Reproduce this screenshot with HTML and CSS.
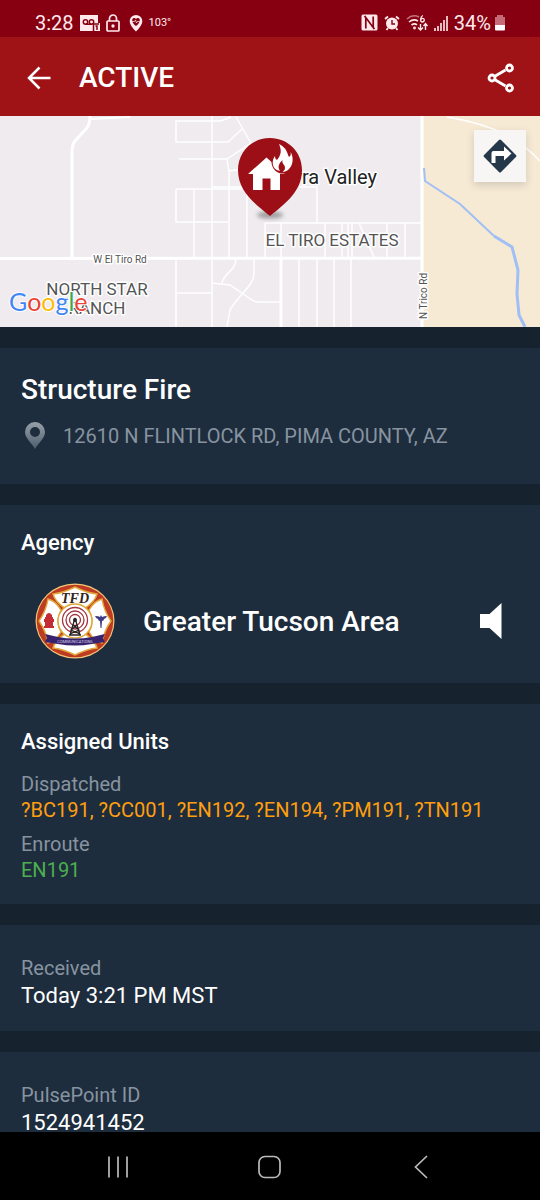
FILE: index.html
```html
<!DOCTYPE html>
<html lang="en">
<head>
    <meta charset="UTF-8">
    <meta name="viewport" content="width=device-width, initial-scale=1.0">
    <title>Active Incident</title>
    <link rel="stylesheet" href="styles.css">
</head>
<body>
    <!-- Status bar -->
    <div class="status-bar">
        <div class="status-group">
            <span class="clock">3:28</span>
            <svg class="status-icon" width="20" height="18" viewBox="0 0 20 18">
                <path fill="#ffe9ec" d="M0 1h18v8h2v8H0z"/>
                <g fill="none" stroke="#860012" stroke-width="1.500">
                    <circle cx="5.500" cy="8" r="2.200"/>
                    <circle cx="11.500" cy="8" r="2.200"/>
                    <path d="M5.500 10.200h6M13.500 17V10H19"/>
                    <path d="M15.500 12h1.500v4"/>
                </g>
            </svg>
            <svg class="status-icon lock" width="14" height="18" viewBox="0 0 14 18" fill="none" stroke="#ffe9ec" stroke-width="1.700">
                <rect x="1" y="7" width="12" height="10" rx="1"/>
                <path d="M3.500 7V4.500a3.500 3.500 0 0 1 7 0V7"/>
                <circle cx="7" cy="12" r=".8" fill="#ffe9ec"/>
            </svg>
            <svg class="status-icon" width="14" height="18" viewBox="0 0 14 18">
                <path fill="#ffe9ec" d="M7 1a6.300 6.300 0 0 0-6.300 6.300C.7 12 7 17.500 7 17.500s6.300-5.500 6.300-10.200A6.300 6.300 0 0 0 7 1z"/>
                <path fill="#860012" d="M7 12C2 8.500 2.600 4 5 4c1 0 1.600.5 2 1.200C7.400 4.500 8 4 9 4c2.400 0 3 4.500-2 8z"/>
                <path fill="none" stroke="#ffe9ec" stroke-width=".7" d="M3 7.500h2.500l1-1.500 1 3 .8-1.500H11"/>
            </svg>
            <span class="temp">103°</span>
        </div>
        <div class="status-group">
            <svg class="status-icon" width="17" height="17" viewBox="0 0 17 17">
                <rect x=".5" y=".5" width="16" height="16" rx="1.500" fill="#ffe9ec"/>
                <path fill="none" stroke="#860012" stroke-width="1.700" d="M4.800 14.500V3.500l7.400 10v-11M3.500 2l2.500 3M11 12l2.500 3"/>
            </svg>
            <svg class="status-icon" width="16" height="16" viewBox="0 0 16 16">
                <circle cx="8" cy="8.500" r="6" fill="#ffe9ec"/>
                <path fill="none" stroke="#ffe9ec" stroke-width="1.800" d="M1 4l3-2.500M15 4l-3-2.500M4 13l-1.500 2M12 13l1.500 2"/>
                <path fill="none" stroke="#860012" stroke-width="1.400" d="M8 5v4h3"/>
            </svg>
            <svg class="status-icon" width="22" height="18" viewBox="0 0 22 18" fill="none" stroke="#ffe9ec" stroke-width="1.600">
                <path opacity=".5" d="M1 5c4-3.800 8-4 12-2"/>
                <path d="M3 8c3-2.500 6-2.800 9-1M5.500 11c2-1.500 4-1.500 5.500 0"/>
                <circle cx="8.500" cy="14" r=".6"/>
                <path stroke-width="1.300" d="M17 1.500c-3 1-3 6-1 6.500 3 0 3-4 0-3.500-1 .2-1.500 1-1.500 1.800"/>
                <path stroke-width="1.400" d="M14.500 10v6M12 13.500l2.500 2.500 2.500-2.500M19.500 16v-6M17.500 12l2-2.500 2 2.500"/>
            </svg>
            <svg class="status-icon" width="14" height="16" viewBox="0 0 14 16" stroke="#ffe9ec" stroke-width="1.600">
                <path d="M1 16v-3M4 16v-5M7 16V8M10 16V5M13 16V1"/>
            </svg>
            <span class="battery-level">34%</span>
            <svg class="status-icon battery" width="12" height="17" viewBox="0 0 12 17">
                <path fill="#c56b78" d="M3 1h6v2h2v9H1V3h2z"/>
                <path fill="#fff" d="M1 11h10v4.500a1 1 0 0 1-1 1H2a1 1 0 0 1-1-1z"/>
            </svg>
        </div>
    </div>

    <!-- App bar -->
    <header class="app-bar">
        <button class="icon-button" aria-label="Back">
            <svg width="24" height="24" viewBox="0 0 24 24" fill="none" stroke="#fff" stroke-width="2.500">
                <path d="M23.500 12H2M12.500 1.500L2 12l10.500 10.500"/>
            </svg>
        </button>
        <h1>ACTIVE</h1>
        <button class="icon-button" aria-label="Share">
            <svg width="28" height="30" viewBox="0 0 28 30" fill="none" stroke="#fff" stroke-width="2.800">
                <path d="M7.500 13.500l11-6.500M7.500 16.500l11 6.500"/>
                <circle cx="5" cy="15" r="3"/>
                <circle cx="22.500" cy="5" r="3"/>
                <circle cx="22.500" cy="25" r="3"/>
            </svg>
        </button>
    </header>

    <main class="content">
        <!-- Map -->
        <div class="map">
            <svg class="map-canvas" viewBox="0 0 540 211" preserveAspectRatio="xMidYMid slice">
                <defs>
                    <filter id="shadow-blur" x="-50%" y="-100%" width="200%" height="300%">
                        <feGaussianBlur stdDeviation="2"/>
                    </filter>
                </defs>
                <rect width="540" height="211" fill="#efebef"/>
                <rect x="423" width="117" height="211" fill="#f6ead5"/>
                <g fill="none" stroke="#fff" stroke-width="1.500">
                    <path d="M231 1l-10 4h-45v21h52l14-13M236 1l15 26M179 43h48l24-16M227 43l2 13v85M229 55l14-2"/>
                    <path d="M212 0v211M176 73h71v68M212 71h35M176 73v33h53M194 73v68M265 107v34"/>
                    <path d="M176 142v69M176 177h36M236 142c0 14-12 14-14 25M212 167l18 2 22 15q3 2 7 2h22"/>
                    <path d="M254 142v15c0 13-14 20-24 37l-3 17"/>
                    <path d="M265 107h157M299 71h18v36M281 107v34M325 107v34M342 107v34M348 107v34M352 107v34M359 107l15 34M387 107v34M405 107v34"/>
                    <path d="M299 142v69M317 142v69M334 142v69M351 142v69"/>
                    <path d="M447 1q36 6 60 18 18 10 33 26"/>
                </g>
                <g fill="none" stroke="#fff" stroke-width="3">
                    <path d="M90 0q0 10-5 14L75 25q-3 4-3 11v105M0 142.500l423-.5M281 142v69M422 0v211"/>
                    <path stroke-width="2" d="M90 3l40-2"/>
                </g>
                <g fill="none" stroke="#a0bff5">
                    <path stroke-width="2" d="M424 52l1 13 35 23 34 32"/>
                    <path stroke-width="3" d="M494 120l18 11 6 23-1 24 2 21 6 12"/>
                </g>
                <g class="map-labels">
                    <text class="town" x="377" y="68" text-anchor="end">Avra Valley</text>
                    <text class="area" x="332" y="130" text-anchor="middle">EL TIRO ESTATES</text>
                    <text class="area" x="97" y="179" text-anchor="middle">NORTH STAR</text>
                    <text class="area" x="97" y="198" text-anchor="middle">RANCH</text>
                    <text class="road" x="120" y="147" text-anchor="middle">W El Tiro Rd</text>
                    <text class="road" transform="translate(427 203) rotate(-90)">N Trico Rd</text>
                </g>
                <text class="google" x="9" y="195"><tspan fill="#4285f4">G</tspan><tspan fill="#ea4335">o</tspan><tspan fill="#fbbc05">o</tspan><tspan fill="#4285f4">g</tspan><tspan fill="#34a853">l</tspan><tspan fill="#ea4335">e</tspan></text>
                <!-- Incident pin -->
                <ellipse cx="270" cy="99" rx="13" ry="3.500" fill="#777" opacity=".7" filter="url(#shadow-blur)"/>
                <path fill="#9d0f16" d="M270 22c-18 0-32 14-32 32 0 21 16 33 32 46 16-13 32-25 32-46 0-18-14-32-32-32z"/>
                <path fill="#fff" d="M266.500 41.500L285 58h-5v16h-9.500V62.500h-8V74H253V58h-5z"/>
                <circle cx="283" cy="46" r="11.500" fill="#9d0f16"/>
                <path fill="#fff" d="M279 28c8 4 8 9 10 13 2-1 2-3 1.500-5 4.500 7 2 19-8 20 3-2 3-5 1.500-7-1.500-2-2-3-1.500-5-4 4-5 7-2.500 11-8-1-9-10-5-15 0 2 .5 3 2 4 4-5 5-9 2-16z"/>
            </svg>
            <button class="directions" aria-label="Directions">
                <svg width="36" height="36" viewBox="0 0 36 36">
                    <rect x="6" y="6" width="24" height="24" rx="1.500" fill="#24384a" transform="rotate(45 18 18)"/>
                    <path fill="#fff" d="M9.500 25V15a2 2 0 0 1 2-2H22V8.500l7.500 7-7.500 7V18h-8.500v7z"/>
                </svg>
            </button>
        </div>

        <section class="card incident">
            <h2>Structure Fire</h2>
            <div class="address">
                <svg width="28" height="28" viewBox="0 0 28 28">
                    <defs>
                        <linearGradient id="pin-fill" x1="0" y1="0" x2="0" y2="1">
                            <stop offset="0" stop-color="#98a1a8"/>
                            <stop offset="1" stop-color="#4b5d6c"/>
                        </linearGradient>
                    </defs>
                    <path fill="url(#pin-fill)" fill-rule="evenodd" d="M14 0a10 10 0 0 0-10 10c0 6 6 10 10 17 4-7 10-11 10-17A10 10 0 0 0 14 0zm0 5a5 5 0 1 1 0 10 5 5 0 0 1 0-10z"/>
                </svg>
                <span>12610 N FLINTLOCK RD, PIMA COUNTY, AZ</span>
            </div>
        </section>

        <section class="card agency">
            <h3>Agency</h3>
            <div class="agency-row">
                <svg width="80" height="76" viewBox="0 0 80 76">
                    <ellipse cx="40" cy="38" rx="39.500" ry="37.500" fill="#f0c878"/>
                    <ellipse cx="40" cy="38" rx="38.300" ry="36.300" fill="#bf3a22"/>
                    <g fill="#fff" stroke="#e0a83a" stroke-width="1.500">
                        <path d="M18 11q10-1 22-7 12 6 22 7-2 8-13 15-9-5-18 0-11-7-13-15z"/>
                        <path d="M18 65q10 1 22 7 12-6 22-7-2-8-13-15-9 5-18 0-11 7-13 15z"/>
                        <path d="M13 16q-2 12-9 22 7 10 9 22 8-2 13-11-6-11 0-22-5-9-13-11z"/>
                        <path d="M67 16q2 12 9 22-7 10-9 22-8-2-13-11 6-11 0-22 5-9 13-11z"/>
                        <circle cx="40" cy="38" r="17"/>
                    </g>
                    <g fill="none" stroke="#a33640" stroke-width="1.300">
                        <circle cx="40" cy="37" r="12.500"/>
                        <circle cx="40" cy="37" r="9"/>
                        <circle cx="40" cy="37" r="5.500"/>
                    </g>
                    <path fill="none" stroke="#222" stroke-width="1.300" d="M40 35l-5 17M40 35l5 17M38 42l6 5-9 4M42 42l-6 5 9 4M34 52h12"/>
                    <circle cx="40" cy="37" r="2" fill="#222"/>
                    <path fill="#c52d34" d="M11 32q3-4 6 0v2h1v2h1v3h-1v4h1v2H9v-2h1v-4H9v-3h1v-2h1z"/>
                    <path fill="#3e3a86" d="M60 33q4 0 5 1l1-2 1 2q2-1 5-1-1 3-3 3 0 2-2 2l-.5 7h-1l-.5-7q-2 0-2-2-2 0-3-3z"/>
                    <path fill="#38246e" d="M10 51l13 3q17 3 34 0l13-3-2 4 2 4-13 2q-17 3-34 0l-13-2 2-4z"/>
                    <text class="badge-ribbon" x="40" y="60" text-anchor="middle">COMMUNICATIONS</text>
                    <text class="badge-name" x="40" y="20" text-anchor="middle">TFD</text>
                </svg>
                <span class="agency-name">Greater Tucson Area</span>
                <button class="icon-button" aria-label="Listen">
                    <svg width="22" height="36" viewBox="0 0 22 36">
                        <path fill="#fff" d="M0 11h9.500L21.500 0v36L9.500 25H0z"/>
                    </svg>
                </button>
            </div>
        </section>

        <section class="card units">
            <h3>Assigned Units</h3>
            <dl>
                <dt>Dispatched</dt>
                <dd class="dispatched">?BC191, ?CC001, ?EN192, ?EN194, ?PM191, ?TN191</dd>
                <dt>Enroute</dt>
                <dd class="enroute">EN191</dd>
            </dl>
        </section>

        <section class="card detail">
            <dl>
                <dt>Received</dt>
                <dd>Today 3:21 PM MST</dd>
            </dl>
        </section>

        <section class="card detail">
            <dl>
                <dt>PulsePoint ID</dt>
                <dd>1524941452</dd>
            </dl>
        </section>
    </main>

    <!-- System navigation -->
    <nav class="nav-bar">
        <button class="icon-button" aria-label="Recents">
            <svg width="24" height="24" viewBox="0 0 24 24" stroke="#bbb" stroke-width="1.700">
                <path d="M3 1.500v21M12 1.500v21M21 1.500v21"/>
            </svg>
        </button>
        <button class="icon-button" aria-label="Home">
            <svg width="24" height="24" viewBox="0 0 24 24" fill="none" stroke="#bbb" stroke-width="1.700">
                <rect x="1" y="1.500" width="21" height="21" rx="6"/>
            </svg>
        </button>
        <button class="icon-button" aria-label="Back">
            <svg width="24" height="24" viewBox="0 0 24 24" fill="none" stroke="#bbb" stroke-width="1.700">
                <path d="M17 1L5.500 12 17 23"/>
            </svg>
        </button>
    </nav>
</body>
</html>
```

FILE: styles.css
```css
* {
    box-sizing: border-box;
}

body {
    display: flex;
    flex-direction: column;
    height: 100vh;
    margin: 0;
    font-family: Roboto, sans-serif;
    background: #16222d;
    color: #fff;
}

h1, h2, h3, dl, dd {
    margin: 0;
}

h1, h2, h3 {
    font-weight: 500;
}

svg {
    display: block;
    flex-shrink: 0;
}

button {
    padding: 0;
    border: 0;
    background: none;
    cursor: pointer;
}

.icon-button {
    display: flex;
    align-items: center;
    justify-content: center;
}

/* Status bar */
.status-bar {
    display: flex;
    flex-shrink: 0;
    justify-content: space-between;
    height: 37px;
    padding: 8px 34px 0 35px;
    background: #860012;
    color: #ffe9ec;
}

.status-group {
    display: flex;
    align-items: center;
    height: 29px;
    gap: 6px;
}

.clock,
.battery-level {
    font-size: 20px;
}

.temp {
    font-size: 11px;
}

.lock {
    margin-right: 3px;
}

.battery {
    margin-left: -3px;
}

/* App bar */
.app-bar {
    display: flex;
    flex-shrink: 0;
    align-items: center;
    height: 79px;
    padding: 2px 25px 0 27px;
    background: #9f1216;
}

.app-bar h1 {
    flex: 1;
    margin-left: 28px;
    font-size: 28px;
    line-height: 32px;
}

.content {
    flex: 1;
    min-height: 0;
    overflow: hidden;
}

/* Map */
.map {
    position: relative;
    height: 211px;
}

.map-canvas {
    width: 100%;
    height: 100%;
}

.map-labels text {
    stroke: #fff;
    stroke-width: 3px;
    stroke-linejoin: round;
    paint-order: stroke;
}

.town {
    font-size: 20px;
    fill: #222;
}

.area {
    font-size: 17px;
    fill: #555;
}

.road {
    font-size: 10px;
    fill: #555;
}

.google {
    font-family: Lato, sans-serif;
    font-size: 25px;
    stroke: #fff;
    stroke-width: 2px;
    paint-order: stroke;
}

.directions {
    position: absolute;
    top: 14px;
    right: 14px;
    display: flex;
    align-items: center;
    justify-content: center;
    width: 52px;
    height: 52px;
    background: #f7f6f5;
    box-shadow: 0 3px 8px rgba(0, 0, 0, 0.15);
}

/* Cards */
.card {
    margin-top: 21px;
    padding: 24px 21px;
    background: #1e2d3d;
}

.card h2 {
    font-size: 28px;
    line-height: 36px;
}

.card h3 {
    font-size: 22px;
    line-height: 28px;
}

.address {
    display: flex;
    align-items: center;
    gap: 14px;
    margin-top: 14px;
    padding-bottom: 10px;
    font-size: 20px;
    line-height: 28px;
    color: #8794a0;
}

.agency-row {
    display: flex;
    align-items: center;
    margin-top: 26px;
    padding: 0 17px 0 14px;
}

.agency-name {
    flex: 1;
    margin-left: 28px;
    font-size: 28px;
    font-weight: 500;
}

.badge-name {
    font-family: "Liberation Serif", serif;
    font-size: 14px;
    font-style: italic;
    font-weight: bold;
    fill: #33241c;
}

.badge-ribbon {
    font-size: 4px;
    fill: #d8cfe8;
}

.card dt {
    font-size: 20px;
    line-height: 26px;
    color: #8794a0;
}

.card dd {
    font-size: 22px;
    line-height: 30px;
}

.units {
    padding-bottom: 13px;
}

.units dl {
    margin-top: 15px;
}

.units dd {
    margin-bottom: 8px;
    font-size: 20px;
    line-height: 26px;
}

.units .dispatched {
    color: #ff9f0f;
}

.units .enroute {
    color: #4caf50;
}

.detail {
    padding: 30px 21px 20px;
}

/* System navigation */
.nav-bar {
    display: flex;
    flex-shrink: 0;
    align-items: center;
    justify-content: space-around;
    height: 68px;
    padding: 2px 42px 0;
    background: #000;
}
```
